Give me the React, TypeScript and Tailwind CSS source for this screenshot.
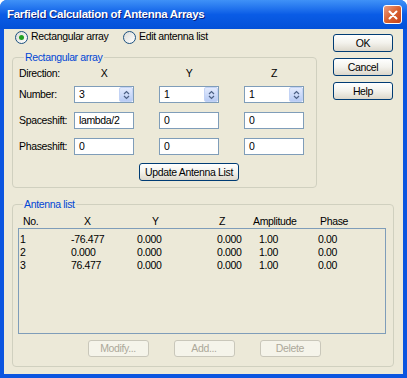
import React from "react";

const font = { fontFamily: '"Liberation Sans", Arial, sans-serif' };

function XPButton({ children, w = "w-[60px]", disabled = false }: { children: React.ReactNode; w?: string; disabled?: boolean }) {
  return disabled ? (
    <div className={`${w} h-[17px] rounded-[3px] border border-[#C9C7BA] bg-[#F5F4EA] text-[#ACA899] flex items-center justify-center leading-none`}>
      {children}
    </div>
  ) : (
    <div className={`${w} h-[18px] rounded-[3px] border border-[#003C74] bg-gradient-to-b from-[#FFFFFF] via-[#F3F2EC] to-[#DCD7CB] text-black flex items-center justify-center leading-none`}>
      {children}
    </div>
  );
}

function Radio({ checked, label }: { checked?: boolean; label: string }) {
  return (
    <div className="flex items-center gap-[3px]">
      <div className="w-[13px] h-[13px] rounded-full border border-[#1C5180] bg-gradient-to-br from-[#DCDCD7] to-[#FFFFFF] flex items-center justify-center">
        {checked && <div className="w-[5px] h-[5px] rounded-full bg-[#21A121]" />}
      </div>
      <span>{label}</span>
    </div>
  );
}

function Spin() {
  return (
    <div className="absolute right-0 top-0 w-[14px] h-[15px] rounded-[2px] bg-gradient-to-b from-[#E3EBFD] to-[#B8CBF4] border border-[#C3D3F5] flex items-center justify-center">
      <svg width="7" height="10" viewBox="0 0 7 10">
        <path d="M1 4 L3.5 1.5 L6 4" stroke="#4D6185" strokeWidth="1.2" fill="none" />
        <path d="M1 6 L3.5 8.5 L6 6" stroke="#4D6185" strokeWidth="1.2" fill="none" />
      </svg>
    </div>
  );
}

function Field({ value, spin }: { value: string; spin?: boolean }) {
  return (
    <div className="relative w-[60px] h-[17px] border border-[#7F9DB9] bg-white flex items-center pl-[4px] leading-none">
      {value}
      {spin && <Spin />}
    </div>
  );
}

function FieldRow({ label, values, spin }: { label: string; values: string[]; spin?: boolean }) {
  return (
    <div className="flex items-center">
      <div className="w-[55px]">{label}</div>
      <div className="flex gap-[25px]">
        {values.map((v, i) => (
          <Field key={i} value={v} spin={spin} />
        ))}
      </div>
    </div>
  );
}

const rows = [
  ["1", "-76.477", "0.000", "0.000", "1.00", "0.00"],
  ["2", "0.000", "0.000", "0.000", "1.00", "0.00"],
  ["3", "76.477", "0.000", "0.000", "1.00", "0.00"],
];

export default function App() {
  return (
    <div style={font} className="w-[407px] h-[378px] flex flex-col rounded-t-[7px] bg-[#0B55E0] text-[10.5px] tracking-[-0.35px] text-black overflow-hidden">
      {/* Title bar */}
      <div className="h-[29px] shrink-0 flex items-center pl-[7px] pr-[5px] bg-gradient-to-b from-[#3F91F7] via-[#0A5CE6] to-[#0451D8]">
        <span className="text-white font-bold text-[11.5px] tracking-[-0.3px] [text-shadow:1px_1px_0_#0A1E78]">
          Farfield Calculation of Antenna Arrays
        </span>
        <div className="ml-auto w-[19px] h-[19px] rounded-[3px] border border-white bg-gradient-to-br from-[#EA9D82] via-[#D9612F] to-[#C4401B] flex items-center justify-center">
          <svg width="10" height="10" viewBox="0 0 10 10">
            <path d="M1.5 1.5 L8.5 8.5 M8.5 1.5 L1.5 8.5" stroke="white" strokeWidth="2" strokeLinecap="round" />
          </svg>
        </div>
      </div>

      {/* Body */}
      <div className="flex-1 mx-[4px] mb-[4px] bg-[#ECE9D8] pl-[8px] pr-[9px] pb-[7px] flex flex-col">
        <div className="flex">
          {/* Left column */}
          <div className="w-[305px] flex flex-col">
            <div className="h-[16px] flex items-center pl-[3px]">
              <div className="w-[108px]">
                <Radio checked label="Rectangular array" />
              </div>
              <Radio label="Edit antenna list" />
            </div>
            <fieldset className="mt-[6px] border border-[#D0D0BF] rounded-[4px] pl-[6px] pb-[6px]">
              <legend className="ml-[5px] px-[1px] text-[#0046D5] leading-[13px]">Rectangular array</legend>
              <div className="flex items-center h-[15px] mt-[2px]">
                <div className="w-[55px]">Direction:</div>
                <div className="flex gap-[25px]">
                  <div className="w-[60px] text-center">X</div>
                  <div className="w-[60px] text-center">Y</div>
                  <div className="w-[60px] text-center">Z</div>
                </div>
              </div>
              <div className="flex flex-col gap-[9px] mt-[5px]">
                <FieldRow label="Number:" values={["3", "1", "1"]} spin />
                <FieldRow label="Spaceshift:" values={["lambda/2", "0", "0"]} />
                <FieldRow label="Phaseshift:" values={["0", "0", "0"]} />
              </div>
              <div className="mt-[8px] pl-[120px]">
                <XPButton w="w-[100px]">Update Antenna List</XPButton>
              </div>
            </fieldset>
          </div>
          {/* Right column */}
          <div className="ml-[16px] pt-[5px] flex flex-col gap-[6px]">
            <XPButton>OK</XPButton>
            <XPButton>Cancel</XPButton>
            <XPButton>Help</XPButton>
          </div>
        </div>

        <fieldset className="mt-[10px] border border-[#D0D0BF] rounded-[4px] pl-[5px] pr-[7px] pb-[5px] flex-1 flex flex-col">
          <legend className="ml-[5px] px-[1px] text-[#0046D5] leading-[13px]">Antenna list</legend>
          <div className="h-[13px] mt-[4px] flex items-center">
            <div className="w-[66px] pl-[5px]">No.</div>
            <div className="w-[68px]">X</div>
            <div className="w-[67px]">Y</div>
            <div className="w-[34px]">Z</div>
            <div className="w-[67px]">Amplitude</div>
            <div>Phase</div>
          </div>
          <div className="h-[106px] border border-[#7F9DB9] bg-[#ECE9D8] pt-[4px]">
            {rows.map((r) => (
              <div key={r[0]} className="h-[13px] flex items-center">
                <div className="w-[52px] pl-[1px]">{r[0]}</div>
                <div className="w-[66px]">{r[1]}</div>
                <div className="w-[80px]">{r[2]}</div>
                <div className="w-[42px]">{r[3]}</div>
                <div className="w-[59px]">{r[4]}</div>
                <div>{r[5]}</div>
              </div>
            ))}
          </div>
          <div className="mt-[6px] flex justify-center gap-[25px] pl-[4px]">
            <XPButton w="w-[61px]" disabled>Modify...</XPButton>
            <XPButton w="w-[61px]" disabled>Add...</XPButton>
            <XPButton w="w-[61px]" disabled>Delete</XPButton>
          </div>
        </fieldset>
      </div>
    </div>
  );
}
